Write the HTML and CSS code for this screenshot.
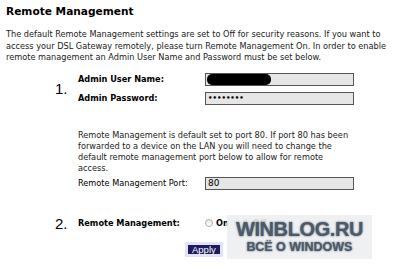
FILE: index.html
```html
<!DOCTYPE html>
<html lang="en">
<head>
  <meta charset="UTF-8" />
  <title>Remote Management</title>
  <link rel="stylesheet" href="styles.css">
</head>
<body>
  <h2>Remote Management</h2>
  <p class="intro">The default Remote Management settings are set to Off for security reasons. If you want to access your DSL Gateway remotely, please turn Remote Management On. In order to enable remote management an Admin User Name and Password must be set below.</p>

  <div class="step step-one">
    <div class="num">1.</div>
    <div class="fields">
      <div class="row">
        <label>Admin User Name:</label>
        <div class="box"><span class="redact"></span></div>
      </div>
      <div class="row">
        <label>Admin Password:</label>
        <div class="box"><span class="dots">••••••••</span></div>
      </div>
    </div>
  </div>

  <div class="port">
    <p>Remote Management is default set to port 80. If port 80 has been forwarded to a device on the LAN you will need to change the default remote management port below to allow for remote access.</p>
    <div class="row">
      <span class="plain">Remote Management Port:</span>
      <div class="box">80</div>
    </div>
  </div>

  <div class="step step-two">
    <div class="num">2.</div>
    <div class="row">
      <label>Remote Management:</label>
      <span class="radios">
        <span class="radio"></span><b>On</b>
        <span class="radio checked"></span><b>Off</b>
      </span>
    </div>
  </div>

  <div class="actions">
    <button>Apply</button>
  </div>

  <div class="watermark">
    <div class="big">WINBLOG.RU</div>
    <div class="small">ВСЁ О WINDOWS</div>
  </div>
</body>
</html>
```

FILE: styles.css
```css
body {
  margin: 0;
  padding: 5px 6px;
  background: #fff;
  color: #000;
  font-family: "DejaVu Sans", Verdana, sans-serif;
  font-size: 8.2px;
  position: relative;
  height: 272px;
  box-sizing: border-box;
  overflow: hidden;
}

h2 {
  margin: 0;
  font-size: 10.6px;
  line-height: 13px;
}

.intro {
  margin: 11px 0 0;
  line-height: 11.5px;
  color: #222;
  width: 385px;
}

.step {
  display: flex;
  align-items: center;
  padding-left: 49px;
}

.step-one {
  margin-top: 9px;
}

.num {
  width: 23px;
  font-family: "Liberation Sans", Arial, sans-serif;
  font-size: 15px;
}

.fields {
  display: flex;
  flex-direction: column;
  gap: 6px;
}

.row {
  display: flex;
  align-items: center;
}

.row label,
.row .plain {
  width: 127px;
  font-weight: bold;
}

.row .plain {
  font-weight: normal;
}

.box {
  width: 145px;
  height: 11px;
  border: 1px solid #555;
  background: #e6e6e6;
  font-size: 9px;
  line-height: 11px;
  padding-left: 2px;
  position: relative;
}

.redact {
  display: block;
  width: 64px;
  height: 11px;
  background: #000;
  border-radius: 5px;
  margin-left: -1px;
}

.dots {
  font-size: 7px;
  font-weight: bold;
  position: relative;
  top: -1px;
}

.port {
  margin: 25px 0 0 72px;
}

.port p {
  margin: 0 0 3px;
  line-height: 11px;
  width: 275px;
  color: #222;
}

.step-two {
  margin-top: 25px;
}

.radios {
  display: flex;
  align-items: center;
  gap: 3px;
}

.radios b + .radio {
  margin-left: 10px;
}

.radio {
  width: 8px;
  height: 8px;
  border-radius: 50%;
  border: 1px solid #b0b0b0;
  background: linear-gradient(#e8e8e8, #fff);
  box-sizing: border-box;
}

.radio.checked {
  background: radial-gradient(circle, #3a6fb0 30%, #dfe8f2 40%);
}

.actions {
  padding-left: 179px;
  margin-top: 10px;
}

button {
  font-family: "Liberation Sans", Arial, sans-serif;
  font-size: 9.5px;
  color: #fff;
  background: #1b1b5e;
  border: 3px solid #e2e2f8;
  padding: 0 4px;
  height: 15px;
  line-height: 9px;
}

.watermark {
  position: absolute;
  left: 227px;
  top: 215px;
  width: 145px;
  height: 44px;
  background: rgba(236, 238, 240, 0.9);
  text-align: center;
  font-family: "Liberation Sans", Arial, sans-serif;
  font-weight: bold;
  color: #4c5a69;
  text-shadow: 0 0 2px rgba(60, 75, 90, 0.9);
}

.watermark .big {
  font-size: 20px;
  line-height: 22px;
  letter-spacing: -0.4px;
  margin-top: 3px;
}

.watermark .small {
  font-size: 12.5px;
  line-height: 14px;
}
```
